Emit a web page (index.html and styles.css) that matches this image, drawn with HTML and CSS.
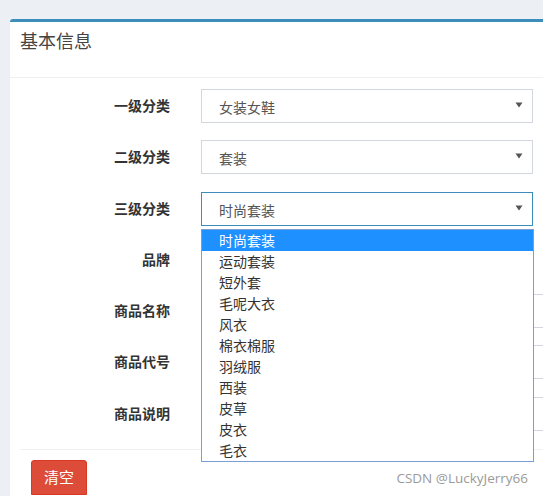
FILE: index.html
```html
<!DOCTYPE html>
<html lang="zh-CN">
<head>
<meta charset="utf-8">
<title>基本信息</title>
<link rel="stylesheet" href="styles.css">
</head>
<body>
<div class="page">
  <div class="box">
    <div class="box-header"><h3 class="box-title">基本信息</h3></div>
    <div class="box-body">
      <div class="form-row">
        <label class="form-label">一级分类</label>
        <div class="select"><span>女装女鞋</span><svg class="caret" width="8" height="6" viewBox="0 0 8 6"><path d="M0.5 0.5h7L4 5.5z" fill="#555"/></svg></div>
      </div>
      <div class="form-row">
        <label class="form-label">二级分类</label>
        <div class="select"><span>套装</span><svg class="caret" width="8" height="6" viewBox="0 0 8 6"><path d="M0.5 0.5h7L4 5.5z" fill="#555"/></svg></div>
      </div>
      <div class="form-row">
        <label class="form-label">三级分类</label>
        <div class="select-wrap">
          <div class="select focused"><span>时尚套装</span><svg class="caret" width="8" height="6" viewBox="0 0 8 6"><path d="M0.5 0.5h7L4 5.5z" fill="#555"/></svg></div>
          <ul class="dropdown">
            <li class="active">时尚套装</li>
            <li>运动套装</li>
            <li>短外套</li>
            <li>毛呢大衣</li>
            <li>风衣</li>
            <li>棉衣棉服</li>
            <li>羽绒服</li>
            <li>西装</li>
            <li>皮草</li>
            <li>皮衣</li>
            <li>毛衣</li>
          </ul>
        </div>
      </div>
      <div class="form-row">
        <label class="form-label">品牌</label>
        <div class="select"><span></span></div>
      </div>
      <div class="form-row">
        <label class="form-label">商品名称</label>
        <div class="input"></div>
      </div>
      <div class="form-row">
        <label class="form-label">商品代号</label>
        <div class="input"></div>
      </div>
      <div class="form-row">
        <label class="form-label">商品说明</label>
        <div class="input"></div>
      </div>
    </div>
    <div class="box-footer">
      <button class="btn-danger" type="button">清空</button>
    </div>
  </div>
  <div class="watermark">CSDN @LuckyJerry66</div>
</div>
</body>
</html>
```
FILE: styles.css
```css
html, body {
  margin: 0;
  padding: 0;
}
body {
  background: #ecf0f5;
  width: 543px;
  height: 496px;
  overflow: hidden;
  font-family: "Noto Sans CJK SC", "Noto Sans", sans-serif;
  font-size: 14px;
  color: #333;
}
.page {
  position: relative;
  height: 496px;
  padding: 19px 0 0 10px;
  box-sizing: border-box;
}
.box {
  width: 533px;
  height: 477px;
  box-sizing: border-box;
  background: #fff;
  border-top: 3px solid #3c8dbc;
  border-radius: 3px 0 0 0;
  box-shadow: 0 1px 1px rgba(0, 0, 0, 0.1);
  overflow: hidden;
}
.box-header {
  height: 56px;
  border-bottom: 1px solid #f0f0f0;
  padding: 8px 0 0 10px;
  box-sizing: border-box;
}
.box-title {
  margin: 0;
  font-size: 18px;
  font-weight: 400;
  line-height: 20px;
  color: #444;
}
.box-body {
  padding: 11px 0 18px 0;
}
.form-row {
  display: grid;
  grid-template-columns: 160px auto;
  column-gap: 31px;
  align-items: start;
  margin-bottom: 17.3px;
}
.form-row:last-child {
  margin-bottom: 0;
}
.form-label {
  text-align: right;
  font-weight: 700;
  line-height: 32px;
  color: #333;
}
.select, .input {
  height: 34px;
  box-sizing: border-box;
  border: 1px solid #d2d6de;
  background: #fff;
}
.select {
  width: 332px;
  display: flex;
  align-items: center;
  justify-content: space-between;
  padding: 2px 9px 0 17px;
  color: #555;
  line-height: 20px;
}
.select.focused {
  border-color: #3c8dbc;
}
.caret {
  display: block;
  margin-top: -4px;
}
.input {
  width: 342px;
  border-right: none;
}
.select-wrap {
  position: relative;
  width: 332px;
}
.dropdown {
  position: absolute;
  left: 0;
  top: 37px;
  width: 333px;
  margin: 0;
  padding: 0;
  list-style: none;
  background: #fff;
  border: 1px solid #7b9fd4;
  box-sizing: border-box;
  z-index: 5;
}
.dropdown li {
  height: 21px;
  line-height: 21px;
  padding-left: 17px;
  color: #333;
}
.dropdown li.active {
  background: #1e90ff;
  color: #fff;
}
.box-footer {
  margin-left: 10px;
  border-top: 1px solid #f0f0f0;
  padding: 10px 0 0 11px;
}
.btn-danger {
  display: block;
  width: 56px;
  height: 35px;
  background: #dd4b39;
  border: 1px solid #d73925;
  border-radius: 3px 3px 0 0;
  color: #fff;
  font-family: "Noto Sans CJK SC", sans-serif;
  font-size: 15px;
  line-height: 20px;
  padding: 0;
}
.watermark {
  position: absolute;
  right: 15px;
  bottom: 9px;
  font-family: "Open Sans", "Noto Sans", sans-serif;
  font-size: 13.5px;
  color: #9a9a9a;
  line-height: 18px;
}
```
